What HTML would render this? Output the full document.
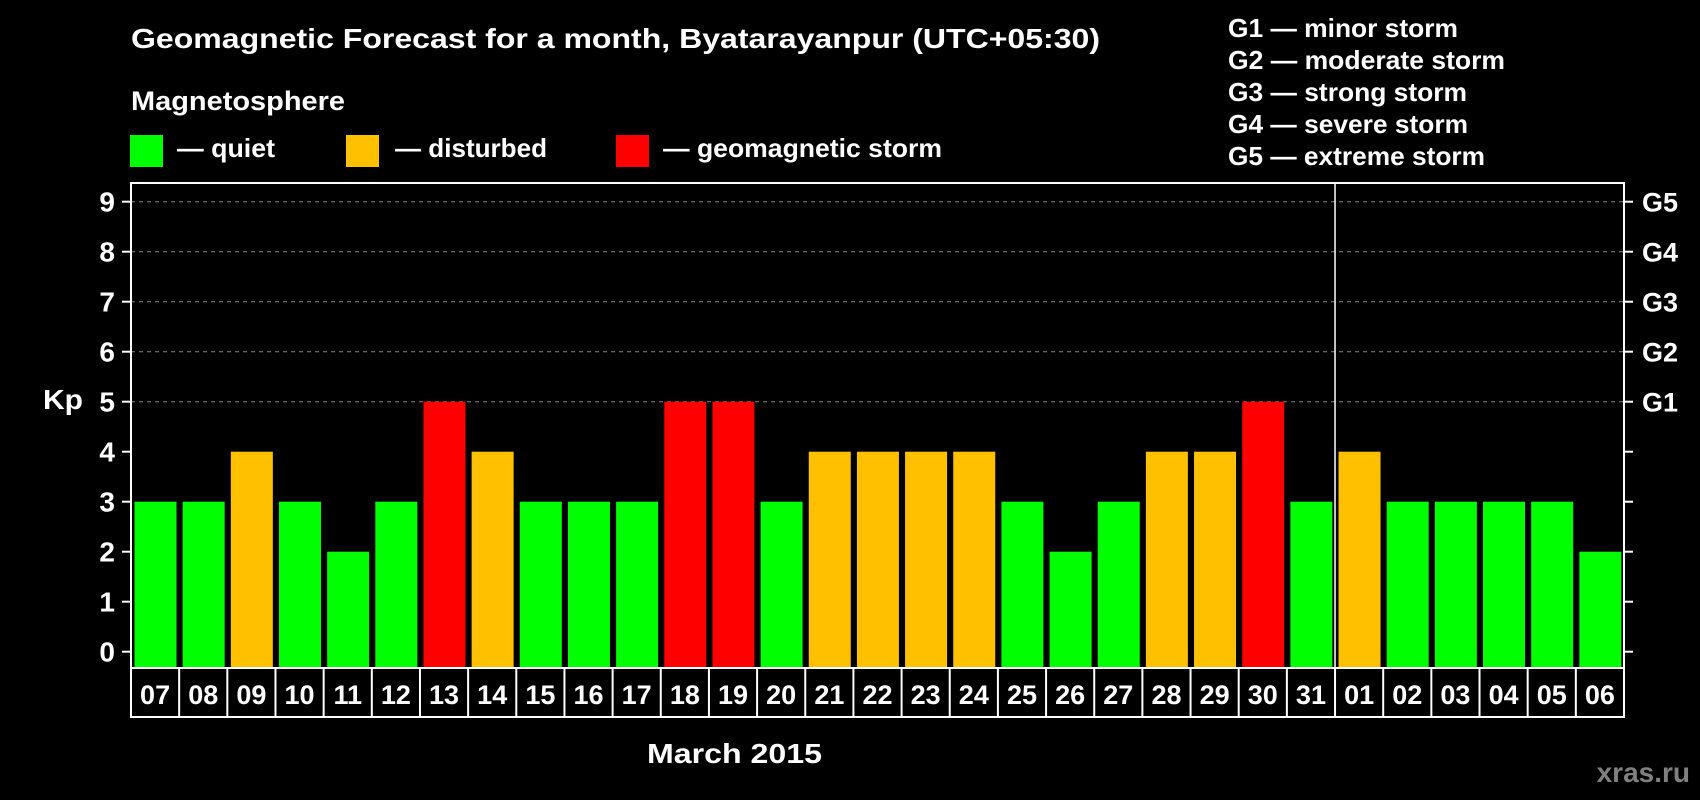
<!DOCTYPE html>
<html><head><meta charset="utf-8"><style>
html,body{margin:0;padding:0;background:#000;}
svg{display:block;}
text{font-family:"Liberation Sans",Arial,sans-serif;font-weight:bold;fill:#fff;}
</style></head><body>
<svg width="1700" height="800" viewBox="0 0 1700 800" xmlns="http://www.w3.org/2000/svg">
<rect width="1700" height="800" fill="#000"/>
<text x="131" y="48" font-size="28" textLength="969" lengthAdjust="spacingAndGlyphs">Geomagnetic Forecast for a month, Byatarayanpur (UTC+05:30)</text>
<text x="131" y="110" font-size="27" textLength="214" lengthAdjust="spacingAndGlyphs">Magnetosphere</text>
<rect x="130" y="135" width="33" height="32" fill="#00ff00"/>
<text x="177" y="157" font-size="26" textLength="98" lengthAdjust="spacingAndGlyphs">— quiet</text>
<rect x="346" y="135" width="33" height="32" fill="#ffc000"/>
<text x="395" y="157" font-size="26" textLength="152" lengthAdjust="spacingAndGlyphs">— disturbed</text>
<rect x="616" y="135" width="33" height="32" fill="#ff0000"/>
<text x="663" y="157" font-size="26" textLength="279" lengthAdjust="spacingAndGlyphs">— geomagnetic storm</text>
<g font-size="26">
<text x="1228" y="37" textLength="230" lengthAdjust="spacingAndGlyphs">G1 — minor storm</text>
<text x="1228" y="69" textLength="277" lengthAdjust="spacingAndGlyphs">G2 — moderate storm</text>
<text x="1228" y="101" textLength="239" lengthAdjust="spacingAndGlyphs">G3 — strong storm</text>
<text x="1228" y="133" textLength="240" lengthAdjust="spacingAndGlyphs">G4 — severe storm</text>
<text x="1228" y="165" textLength="257" lengthAdjust="spacingAndGlyphs">G5 — extreme storm</text>
</g>
<g id="plot"></g>
<text x="43" y="409" font-size="28" textLength="40" lengthAdjust="spacingAndGlyphs">Kp</text>
<text x="647" y="763" font-size="28" textLength="175" lengthAdjust="spacingAndGlyphs">March 2015</text>
<text x="1690" y="782" font-size="28" text-anchor="end" style="fill:#808080">xras.ru</text>
</svg>
<script>
var vals=[3,3,4,3,2,3,5,4,3,3,3,5,5,3,4,4,4,4,3,2,3,4,4,5,3,4,3,3,3,3,2];
var days=["07","08","09","10","11","12","13","14","15","16","17","18","19","20","21","22","23","24","25","26","27","28","29","30","31","01","02","03","04","05","06"];
var L=131,R=1624,T=183,B=668,LB=717,w=(R-L)/31,s="";
function y(v){return 651.7-50*v;}
for(var v=5;v<=9;v++)s+='<line x1="'+L+'" x2="'+R+'" y1="'+y(v)+'" y2="'+y(v)+'" stroke="#888" stroke-width="1" stroke-dasharray="4,4"/>';
for(var i=0;i<31;i++){var c=vals[i]==5?"#ff0000":vals[i]==4?"#ffc000":"#00ff00";
s+='<rect x="'+(L+i*w+3.5)+'" y="'+y(vals[i])+'" width="42" height="'+(B-y(vals[i]))+'" fill="'+c+'"/>';
s+='<text x="'+(L+i*w+w/2)+'" y="'+(B+36)+'" font-size="27" text-anchor="middle">'+days[i]+'</text>';
if(i>0)s+='<line x1="'+(L+i*w)+'" x2="'+(L+i*w)+'" y1="'+B+'" y2="'+LB+'" stroke="#fff" stroke-width="2"/>';}
s+='<line x1="'+(L+25*w)+'" x2="'+(L+25*w)+'" y1="'+T+'" y2="'+B+'" stroke="#fff" stroke-width="1.5"/>';
s+='<rect x="'+L+'" y="'+T+'" width="'+(R-L)+'" height="'+(LB-T)+'" fill="none" stroke="#fff" stroke-width="2"/>';
s+='<line x1="'+L+'" x2="'+R+'" y1="'+B+'" y2="'+B+'" stroke="#fff" stroke-width="2"/>';
for(var v=0;v<=9;v++){s+='<line x1="122" x2="'+L+'" y1="'+y(v)+'" y2="'+y(v)+'" stroke="#fff" stroke-width="2"/>';
s+='<line x1="'+R+'" x2="1633" y1="'+y(v)+'" y2="'+y(v)+'" stroke="#fff" stroke-width="2"/>';
s+='<text x="115" y="'+(y(v)+10)+'" font-size="28" text-anchor="end">'+v+'</text>';
if(v>=5)s+='<text x="1642" y="'+(y(v)+10)+'" font-size="27">G'+(v-4)+'</text>';}
document.getElementById("plot").innerHTML=s;
</script>
</body></html>
